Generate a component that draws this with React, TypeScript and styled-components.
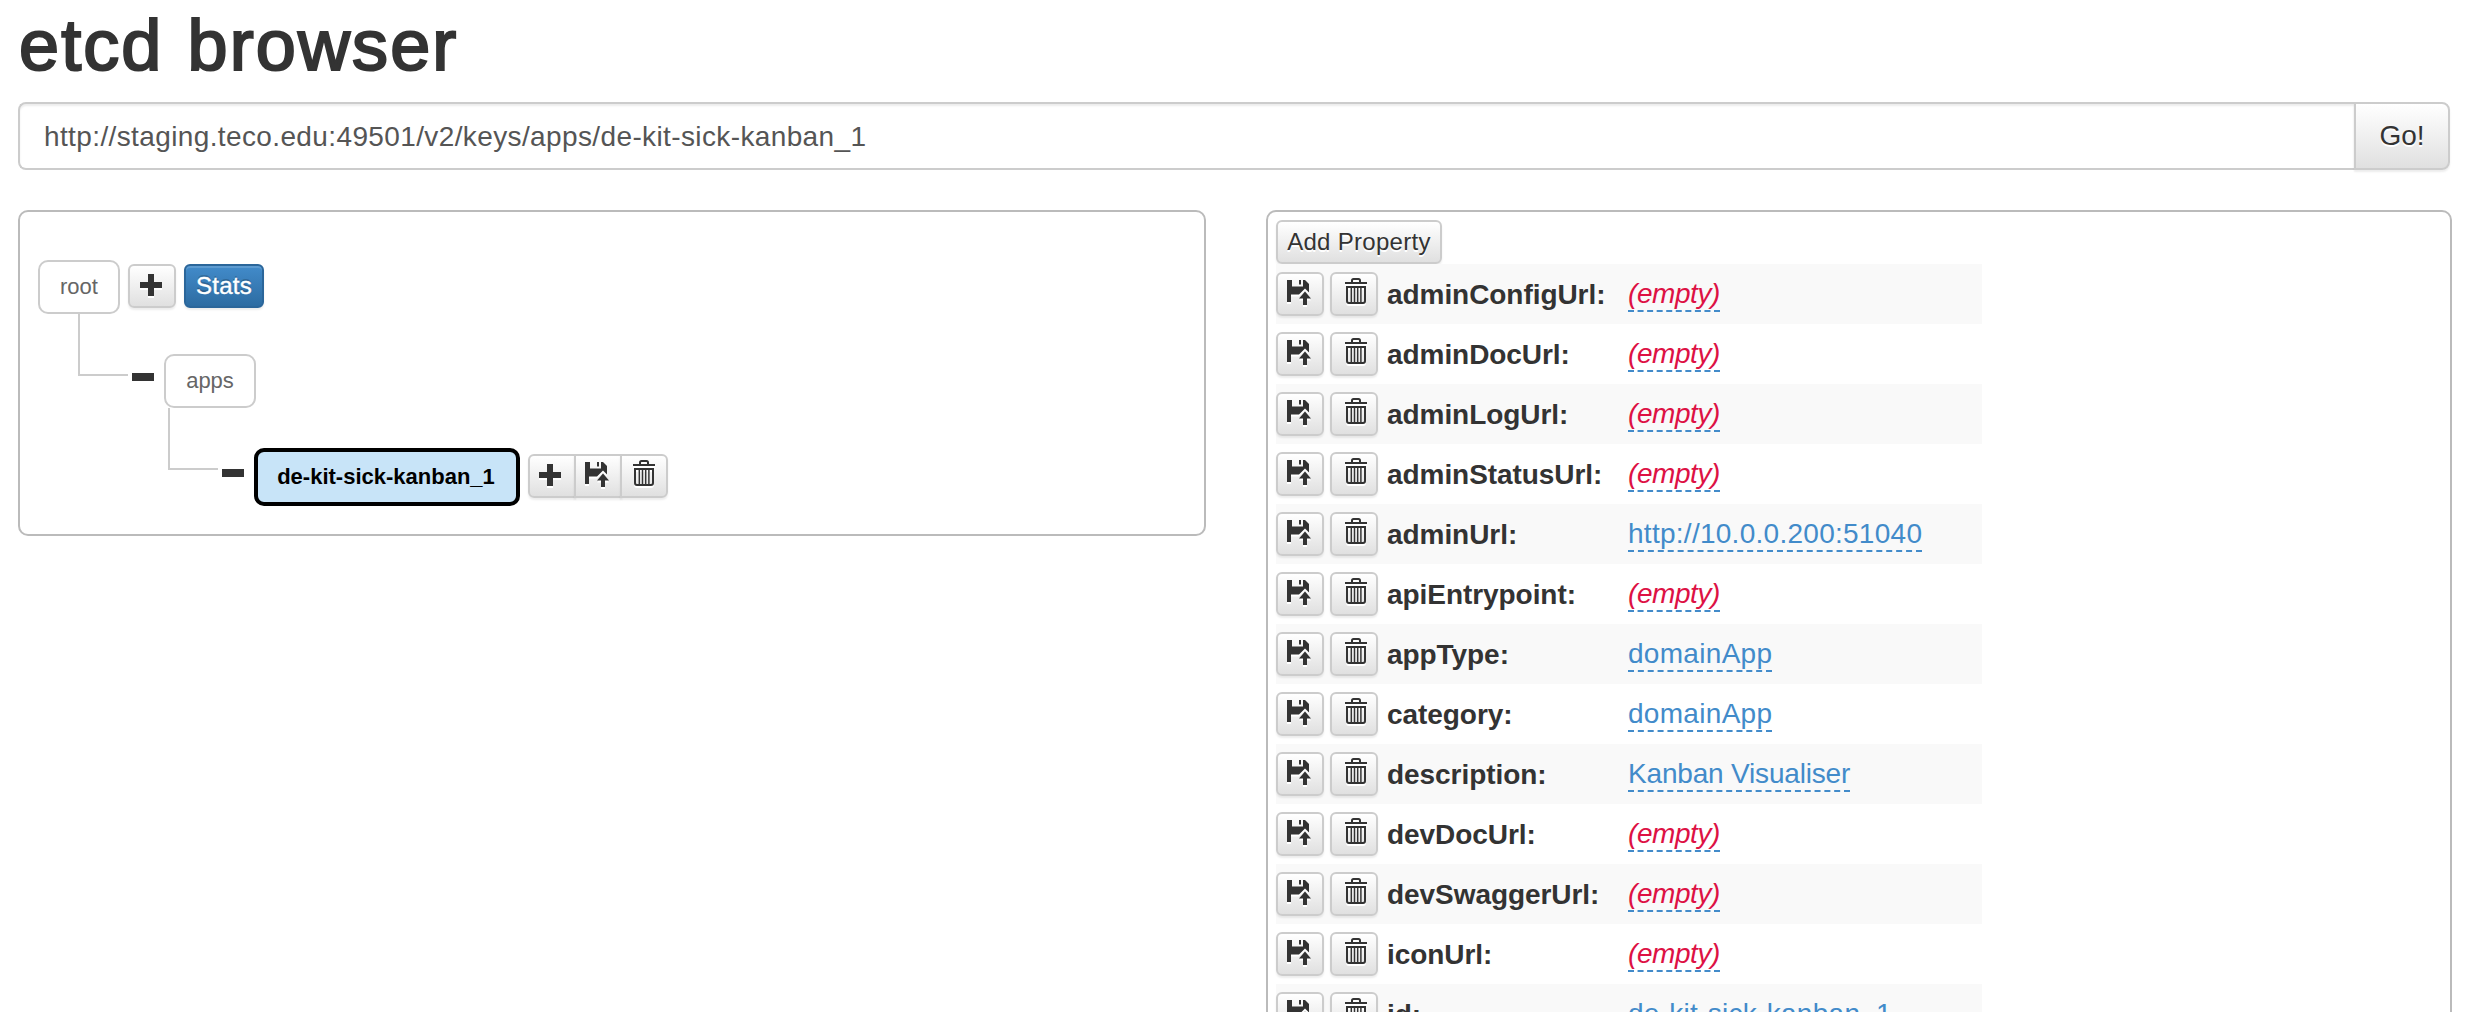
import React from "react";
import styled, { createGlobalStyle, css } from "styled-components";

const Global = createGlobalStyle`
  *, *::before, *::after { box-sizing: border-box; }
  html { overflow: hidden; }
  body {
    margin: 0;
    height: 1012px;
    overflow: hidden;
    background: #fff;
    color: #333;
    font-family: "Liberation Sans", Arial, sans-serif;
    font-size: 28px;
  }
`;

const Page = styled.div`
  height: 1012px;
  overflow: hidden;
  padding: 0 24px 0 18px;
`;

const Title = styled.h1`
  margin: 0;
  height: 102px;
  padding: 6px 0 0 1px;
  font-size: 72px;
  line-height: 79px;
  font-weight: 400;
  letter-spacing: 2.1px;
  word-spacing: 2px;
  -webkit-text-stroke: 2.2px #333;
`;

const Spaced = styled.span<{ $ls: number }>`
  letter-spacing: ${(p) => p.$ls}px;
`;

const AddressBar = styled.form`
  display: flex;
  height: 68px;
  width: 2432px;
  margin: 0 0 40px;
`;

const AddressField = styled.div`
  flex: 1;
  border: 2px solid #ccc;
  border-right: 0;
  border-radius: 8px 0 0 8px;
  box-shadow: inset 0 2px 2px rgba(0, 0, 0, 0.075);
  padding: 1px 0 0 24px;
  line-height: 64px;
  color: #555;
`;

const buttonLook = css`
  display: flex;
  align-items: center;
  justify-content: center;
  padding: 0;
  font-family: inherit;
  color: #333;
  border: 2px solid #ccc;
  background: linear-gradient(#fff, #e0e0e0);
  text-shadow: 0 2px 0 #fff;
  box-shadow: inset 0 2px 0 rgba(255, 255, 255, 0.15), 0 2px 2px rgba(0, 0, 0, 0.075);
`;

const GoButton = styled.button`
  ${buttonLook}
  width: 96px;
  font-size: 28px;
  border-radius: 0 8px 8px 0;
`;

const Button = styled.button<{ $width?: number; $primary?: boolean }>`
  ${buttonLook}
  flex: none;
  width: ${(p) => p.$width ?? 48}px;
  height: 44px;
  font-size: 24px;
  letter-spacing: 0.3px;
  border-radius: 6px;
  svg { filter: drop-shadow(0 2px 0 #fff); }
  ${(p) =>
    p.$primary &&
    css`
      color: #fff;
      border-color: #2b669a;
      background: linear-gradient(#428bca, #2d6ca2);
      text-shadow: 0 -2px 0 rgba(0, 0, 0, 0.2);
      -webkit-text-stroke: 0.4px #fff;
    `}
`;

const ButtonGroup = styled.div`
  display: flex;
  ${Button} { border-radius: 0; margin-left: -2px; }
  ${Button}:first-child { border-radius: 6px 0 0 6px; margin-left: 0; padding-right: 2px; }
  ${Button}:last-child { border-radius: 0 6px 6px 0; padding-left: 0; }
`;

const Columns = styled.div`
  display: flex;
  align-items: flex-start;
  gap: 60px;
`;

const Panel = styled.section<{ $width: number }>`
  width: ${(p) => p.$width}px;
  border: 2px solid #bbb;
  border-radius: 10px;
`;

const TreePanel = styled(Panel)`
  height: 326px;
  padding: 48px 18px 0;
`;

const PropertyPanel = styled(Panel)`
  height: 860px;
  padding: 8px;
`;

const RootRow = styled.div`
  display: flex;
  align-items: flex-start;
  gap: 8px;
  height: 54px;
`;

const RootActions = styled.div`
  display: flex;
  gap: 8px;
  padding-top: 4px;
`;

const TreeNode = styled.div<{ $width: number; $selected?: boolean }>`
  display: flex;
  align-items: center;
  justify-content: center;
  flex: none;
  width: ${(p) => p.$width}px;
  height: ${(p) => (p.$selected ? 58 : 54)}px;
  padding-right: ${(p) => (p.$selected ? 2 : 0)}px;
  border: ${(p) => (p.$selected ? "4px solid #000" : "2px solid #ccc")};
  border-radius: 10px;
  font-size: 22px;
  font-weight: ${(p) => (p.$selected ? 700 : 400)};
  color: ${(p) => (p.$selected ? "#000" : "#666")};
  background: ${(p) => (p.$selected ? "#c8e4f8" : "#fff")};
`;

const Branch = styled.div<{ $indent: number }>`
  display: flex;
  align-items: flex-start;
  padding-left: ${(p) => p.$indent}px;
`;

const Elbow = styled.div`
  width: 50px;
  height: 62px;
  border-left: 2px solid #ccc;
  border-bottom: 2px solid #ccc;
`;

const Collapse = styled.div<{ $top: number }>`
  width: 22px;
  height: 8px;
  margin: ${(p) => p.$top}px 10px 0 4px;
  background: #333;
`;

const Drop = styled.div`
  display: flex;
  align-items: center;
  gap: 8px;
  padding-top: 40px;
`;

const NodeActions = styled.div`
  padding-bottom: 2px;
`;

const Row = styled.div<{ $striped: boolean }>`
  display: flex;
  align-items: center;
  width: 706px;
  height: 60px;
  background: ${(p) => (p.$striped ? "#f9f9f9" : "#fff")};
`;

const RowActions = styled.div`
  display: flex;
  gap: 6px;
  width: 111px;
  ${Button}:last-child { padding-left: 4px; }
`;

const Key = styled.div`
  width: 241px;
  padding-top: 1px;
  font-weight: 700;
  line-height: 32px;
  letter-spacing: -0.06px;
  white-space: nowrap;
`;

const Value = styled.a<{ $empty: boolean; $ls: number }>`
  height: 36px;
  padding-top: 2px;
  line-height: 32px;
  white-space: nowrap;
  letter-spacing: ${(p) => p.$ls}px;
  color: ${(p) => (p.$empty ? "#dd1144" : "#428bca")};
  font-style: ${(p) => (p.$empty ? "italic" : "normal")};
  border-bottom: 2px dashed #428bca;
`;

const Glyph = styled.svg`
  flex: none;
  overflow: visible;
`;

const PlusIcon = () => (
  <Glyph width="24" height="24" viewBox="0 0 24 24" fill="#333">
    <path d="M8 0h6v8h8v6h-8v8H8v-8H0V8h8z" />
  </Glyph>
);

const SaveIcon = () => (
  <Glyph width="26" height="28" viewBox="0 0 26 28" fill="#333">
    <path d="M0 0h5v6.500h11V0h2l4 4v8.500l-4-4-6 6H4V22H0zM12 0h2v4.500h-2z" />
    <path d="M18 11.500l6 7h-4V25h-4v-6.500h-4z" />
  </Glyph>
);

const TrashIcon = () => (
  <Glyph width="22" height="32" viewBox="0 0 22 32" fill="none" stroke="#333" strokeWidth="2">
    <path d="M0 5h22M7 5V2.500Q7 1 8.500 1h5Q15 1 15 2.500V5" />
    <path d="M2 9h18v14q0 2-2 2H4q-2 0-2-2z" />
    <path d="M6.300 9v15M9.500 9v15M12.700 9v15M15.900 9v15" strokeWidth="1.500" />
  </Glyph>
);

const properties: { name: string; value?: string; spacing?: number }[] = [
  { name: "adminConfigUrl" },
  { name: "adminDocUrl" },
  { name: "adminLogUrl" },
  { name: "adminStatusUrl" },
  { name: "adminUrl", value: "http://10.0.0.200:51040", spacing: 0.27 },
  { name: "apiEntrypoint" },
  { name: "appType", value: "domainApp", spacing: 0.3 },
  { name: "category", value: "domainApp", spacing: 0.3 },
  { name: "description", value: "Kanban Visualiser", spacing: -0.18 },
  { name: "devDocUrl" },
  { name: "devSwaggerUrl" },
  { name: "iconUrl" },
  { name: "id", value: "de-kit-sick-kanban_1", spacing: 0.28 },
];

export default function App() {
  return (
    <Page>
      <Global />
      <Title>etcd browser</Title>
      <AddressBar>
        <AddressField>
          <Spaced $ls={0.38}>http://staging.teco.edu:49501/v2/keys/apps/de-kit-sick-kanban_1</Spaced>
        </AddressField>
        <GoButton type="button">Go!</GoButton>
      </AddressBar>
      <Columns>
        <TreePanel $width={1188}>
          <RootRow>
            <TreeNode $width={82}>root</TreeNode>
            <RootActions>
              <Button><PlusIcon /></Button>
              <Button $width={80} $primary>Stats</Button>
            </RootActions>
          </RootRow>
          <Branch $indent={40}>
            <Elbow />
            <Collapse $top={59} />
            <Drop>
              <TreeNode $width={92}>apps</TreeNode>
            </Drop>
          </Branch>
          <Branch $indent={130}>
            <Elbow />
            <Collapse $top={61} />
            <Drop>
              <TreeNode $width={266} $selected>de-kit-sick-kanban_1</TreeNode>
              <NodeActions>
                <ButtonGroup>
                  <Button><PlusIcon /></Button>
                  <Button><SaveIcon /></Button>
                  <Button><TrashIcon /></Button>
                </ButtonGroup>
              </NodeActions>
            </Drop>
          </Branch>
        </TreePanel>
        <PropertyPanel $width={1186}>
          <Button $width={166}>Add Property</Button>
          {properties.map((p, i) => (
            <Row key={p.name} $striped={i % 2 === 0}>
              <RowActions>
                <Button><SaveIcon /></Button>
                <Button><TrashIcon /></Button>
              </RowActions>
              <Key>{p.name}:</Key>
              <Value $empty={!p.value} $ls={p.spacing ?? -0.42}>{p.value ?? "(empty)"}</Value>
            </Row>
          ))}
        </PropertyPanel>
      </Columns>
    </Page>
  );
}
